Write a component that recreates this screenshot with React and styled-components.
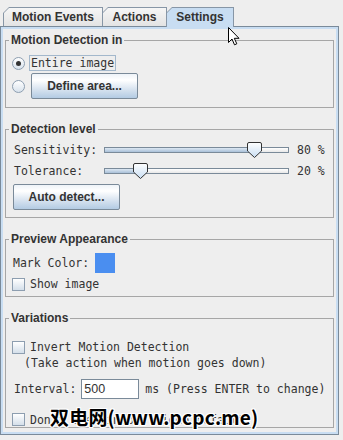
import React from 'react';
import styled, {createGlobalStyle} from 'styled-components';

const GlobalStyle = createGlobalStyle`
    html, body {
        margin: 0;
        padding: 0;
        background: #eeeeee;
    }
`;

const tabs = [
    {label: 'Motion Events', width: 100},
    {label: 'Actions', width: 65},
    {label: 'Settings', width: 68, active: true},
];

const sliderPos = (v) => -2 + v * 1.89;

const Slider = ({value}) => {
    const center = sliderPos(value);
    return (
        <Track>
            <TrackFill style={{width: `${center}px`}}/>
            <Thumb style={{left: `${center - 7.5}px`}} width="15" height="16" viewBox="0 0 15 16">
                <defs>
                    <linearGradient id="thumbGrad" x1="0" y1="0" x2="0" y2="1">
                        <stop offset="0" stopColor="#ffffff"/>
                        <stop offset="1" stopColor="#c8ddf2"/>
                    </linearGradient>
                </defs>
                <path d="M2,0.5 H13 Q14.5,0.5 14.5,2 V9 L7.5,15.5 L0.5,9 V2 Q0.5,0.5 2,0.5 Z"
                      fill="url(#thumbGrad)" stroke="#333" strokeWidth="1"/>
            </Thumb>
        </Track>
    );
};

const App = () => {
    return (
        <Window>
            <GlobalStyle/>
            <TabStrip>
                {tabs.map((t, i) => (
                    <Tab key={t.label} $w={t.width} $first={i === 0} $active={t.active}>
                        <TabLabel>{t.label}</TabLabel>
                    </Tab>
                ))}
            </TabStrip>
            <Panel>
                <Group $pad="8px 6px 8px 6px" $gap={2}>
                    <Legend>Motion Detection in</Legend>
                    <Row $h={16}>
                        <Radio $on/>
                        <FocusText>Entire image</FocusText>
                    </Row>
                    <Row $h={26}>
                        <Radio/>
                        <Button $ml={6}>Define area...</Button>
                    </Row>
                </Group>

                <Group $pad="6px 6px 7px 6px" $gap={5}>
                    <Legend>Detection level</Legend>
                    <Row $h={16}>
                        <Mono $w={92} $pl={2}>Sensitivity:</Mono>
                        <Slider value={80}/>
                        <Mono $pl={8}>80 %</Mono>
                    </Row>
                    <Row $h={16}>
                        <Mono $w={92} $pl={2}>Tolerance:</Mono>
                        <Slider value={20}/>
                        <Mono $pl={8}>20 %</Mono>
                    </Row>
                    <Row $h={26}>
                        <Button $ml={1}>Auto detect...</Button>
                    </Row>
                </Group>

                <Group $pad="7px 6px 4px 6px" $gap={3}>
                    <Legend>Preview Appearance</Legend>
                    <Row $h={20}>
                        <Mono $pl={1}>Mark Color:</Mono>
                        <Swatch/>
                    </Row>
                    <Row $h={16}>
                        <Check/>
                        <Mono $pl={5}>Show image</Mono>
                    </Row>
                </Group>

                <Group $pad="14px 6px 0 6px" $gap={0}>
                    <Legend>Variations</Legend>
                    <Row $h={16}>
                        <Check/>
                        <Mono $pl={5}>Invert Motion Detection</Mono>
                    </Row>
                    <Row $h={16}>
                        <Mono $pl={12}>(Take action when motion goes down)</Mono>
                    </Row>
                    <Row $h={20} $mt={8}>
                        <Mono $pl={2}>Interval:</Mono>
                        <Field defaultValue="500"/>
                        <Mono>ms (Press ENTER to change)</Mono>
                    </Row>
                    <Row $h={15} $mt={13}>
                        <Check/>
                        <Mono $pl={5}>Don't use Windows video default.</Mono>
                    </Row>
                </Group>
            </Panel>

            <Watermark>双电网(www.pcpc.me)</Watermark>

            <Cursor width="13" height="19" viewBox="0 0 13 19">
                <path d="M0.5,0.5 L0.5,15.5 L4,12 L6.5,17.8 L8.8,16.8 L6.3,11.3 L11,11.3 Z"
                      fill="#fff" stroke="#000" strokeWidth="1" strokeLinejoin="miter"/>
            </Cursor>
        </Window>
    );
};

export default App;

const Window = styled.div`
    position: relative;
    width: 343px;
    height: 440px;
    padding-top: 7px;
    box-sizing: border-box;
    overflow: hidden;
    background: #eeeeee;
    color: #333333;
    font-family: "Liberation Sans", Arial, sans-serif;
`;

const TabStrip = styled.div`
    display: flex;
    align-items: flex-start;
    height: 19px;
    padding-left: 3px;
`;

const Tab = styled.div`
    position: relative;
    z-index: ${({$active}) => ($active ? 2 : 1)};
    flex: none;
    width: ${({$w}) => $w}px;
    height: ${({$active}) => ($active ? 20 : 19)}px;
    margin-left: ${({$first}) => ($first ? 0 : -1)}px;
    background: #8796a6;
    clip-path: polygon(0 6px, 6px 0, 100% 0, 100% 100%, 0 100%);

    &::before {
        content: "";
        position: absolute;
        left: 1px;
        right: 1px;
        top: 1px;
        bottom: 0;
        background: ${({$active}) => ($active ? '#c8ddf2' : 'linear-gradient(#f6f6f6, #e3e3e3)')};
        clip-path: polygon(0 5px, 5px 0, 100% 0, 100% 100%, 0 100%);
    }
`;

const TabLabel = styled.span`
    position: relative;
    display: block;
    height: 19px;
    line-height: 20px;
    text-align: center;
    font-size: 12px;
    font-weight: bold;
    color: #333333;
`;

const Panel = styled.div`
    width: 339px;
    box-sizing: border-box;
    border: 1px solid #7a8a99;
    box-shadow: inset 0 0 0 2px #c8ddf2;
    padding: 6px 4px 6px 4px;
    display: flex;
    flex-direction: column;
    gap: 14px;
`;

const Group = styled.fieldset`
    margin: 0;
    min-width: 0;
    border: 1px solid #a6a6a6;
    padding: ${({$pad}) => $pad};
    display: flex;
    flex-direction: column;
    gap: ${({$gap}) => $gap}px;
`;

const Legend = styled.legend`
    margin-left: -3px;
    padding: 0 2px;
    font-size: 12px;
    line-height: 14px;
    font-weight: bold;
    color: #333333;
`;

const Row = styled.div`
    display: flex;
    align-items: center;
    height: ${({$h}) => $h}px;
    margin-top: ${({$mt}) => $mt || 0}px;
`;

const Mono = styled.span`
    flex: none;
    box-sizing: border-box;
    width: ${({$w}) => ($w ? `${$w}px` : 'auto')};
    padding-left: ${({$pl}) => $pl || 0}px;
    font-family: "DejaVu Sans Mono", "Liberation Mono", monospace;
    font-size: 11.5px;
    line-height: 16px;
    color: #333333;
    white-space: pre;
`;

const Radio = styled.span`
    flex: none;
    width: 13px;
    height: 13px;
    box-sizing: border-box;
    border-radius: 50%;
    border: 1px solid #8d9eb0;
    background: linear-gradient(#ffffff, #d8e2ec);
    display: flex;
    align-items: center;
    justify-content: center;

    &::after {
        content: "";
        display: ${({$on}) => ($on ? 'block' : 'none')};
        width: 5px;
        height: 5px;
        border-radius: 50%;
        background: #333333;
    }
`;

const FocusText = styled.span`
    margin-left: 4px;
    padding: 0 1px 0 1px;
    border: 1px solid #a3b8cc;
    font-family: "DejaVu Sans Mono", "Liberation Mono", monospace;
    font-size: 11.5px;
    line-height: 14px;
    color: #333333;
`;

const Button = styled.button`
    flex: none;
    width: 107px;
    height: 26px;
    box-sizing: border-box;
    margin: 0 0 0 ${({$ml}) => $ml || 0}px;
    padding: 0;
    border: 1px solid #7a8a99;
    border-radius: 2px;
    background: linear-gradient(#eef3f8 0%, #ffffff 25%, #d6e2ef 65%, #b3cbe3 100%);
    font-family: "Liberation Sans", Arial, sans-serif;
    font-size: 12px;
    font-weight: bold;
    color: #333333;
`;

const Track = styled.div`
    position: relative;
    flex: none;
    width: 185px;
    height: 6px;
    box-sizing: border-box;
    border: 1px solid #7a8a99;
    background: linear-gradient(#ffffff, #e8e8e8);
`;

const TrackFill = styled.div`
    height: 100%;
    background: linear-gradient(#dde8f3, #a9c0d8);
`;

const Thumb = styled.svg`
    position: absolute;
    top: -6px;
    display: block;
`;

const Swatch = styled.span`
    flex: none;
    width: 20px;
    height: 20px;
    margin-left: 6px;
    background: #4a8ef0;
`;

const Check = styled.span`
    flex: none;
    width: 13px;
    height: 13px;
    box-sizing: border-box;
    border: 1px solid #8d9eb0;
    background: linear-gradient(#ffffff, #d4dfea);
`;

const Field = styled.input`
    flex: none;
    width: 58px;
    height: 20px;
    box-sizing: border-box;
    margin: 0 6px 0 5px;
    padding: 0 0 0 2px;
    border: 1px solid #7a8a99;
    background: #ffffff;
    outline: none;
    font-family: "Liberation Sans", Arial, sans-serif;
    font-size: 12.5px;
    color: #333333;
`;

const Watermark = styled.div`
    position: absolute;
    left: 50px;
    top: 404px;
    font-family: "Noto Sans CJK SC", "Noto Sans", sans-serif;
    font-size: 19px;
    font-weight: bold;
    line-height: 26px;
    letter-spacing: 0.2px;
    color: #000000;
    white-space: nowrap;
    text-shadow: 1px 0 0 #fff, -1px 0 0 #fff, 0 1px 0 #fff, 0 -1px 0 #fff,
    1px 1px 0 #fff, -1px -1px 0 #fff, 1px -1px 0 #fff, -1px 1px 0 #fff;
`;

const Cursor = styled.svg`
    position: absolute;
    left: 228px;
    top: 27px;
    display: block;
`;
